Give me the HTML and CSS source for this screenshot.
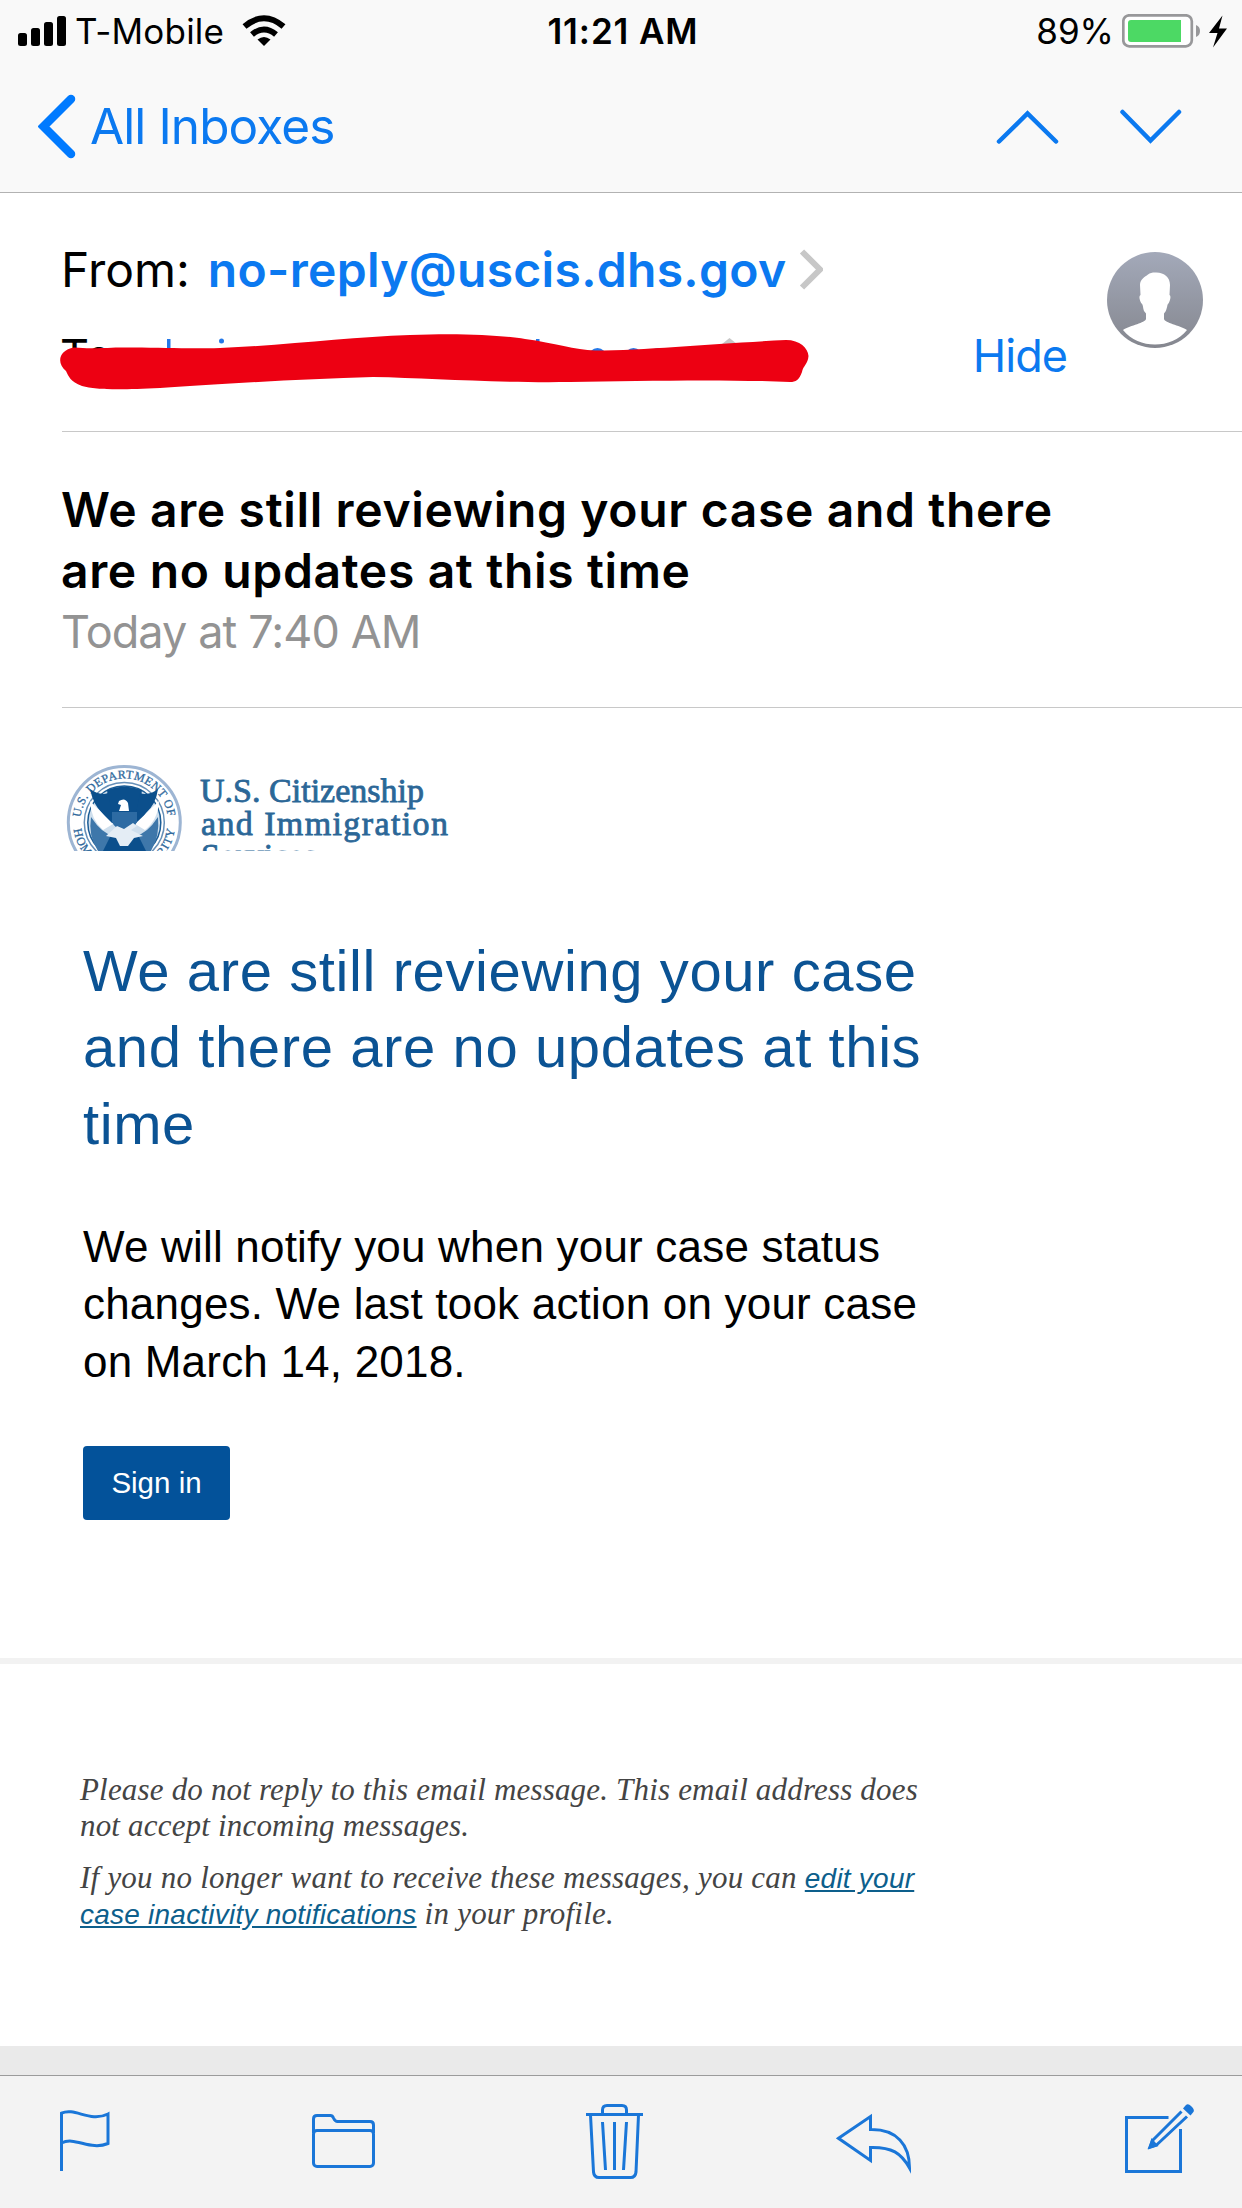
FILE: index.html
```html
<!DOCTYPE html>
<html lang="en">
  <head>
    <meta charset="UTF-8" />
    <meta name="viewport" content="width=device-width, initial-scale=1.0" />
    <title>All Inboxes</title>
    <link rel="stylesheet" href="styles.css">
  </head>
  <body>
    <div class="topbar">
      <div class="status">
        <div class="status-left">
          <svg class="signal" viewBox="18 15 48 30" width="48" height="30">
            <rect x="18" y="32" width="9" height="13" rx="2.5" />
            <rect x="31" y="27" width="9" height="18" rx="2.5" />
            <rect x="44" y="21" width="9" height="24" rx="2.5" />
            <rect x="57" y="15" width="9" height="30" rx="2.5" />
          </svg>
          <span class="carrier">T-Mobile</span>
          <svg class="wifi" viewBox="242 14 44 32" width="44" height="32">
            <path d="M244.500 25.500Q264 9 283.500 25.500" fill="none" stroke="#000" stroke-width="6" />
            <path d="M252 33.500Q264 23.500 276 33.500" fill="none" stroke="#000" stroke-width="6" />
            <path d="M257.500 38.500Q264 33.500 270.500 38.500L264 45Z" />
          </svg>
        </div>
        <span class="time">11:21 AM</span>
        <div class="status-right">
          <span class="percent">89%</span>
          <svg class="battery" viewBox="1122 13 106 34" width="106" height="34">
            <rect x="1123.300" y="14.300" width="68.500" height="31" rx="6" fill="#fff" stroke="#98989a" stroke-width="2.700" />
            <path d="M1131 19h50v22h-50a3 3 0 0 1-3-3v-16a3 3 0 0 1 3-3z" fill="#4cd964" />
            <path d="M1196 24q4 1.500 4 6t-4 6z" fill="#98989a" />
            <path d="M1222.500 14.500L1209 32h8.500L1213 46.500L1227 27.500h-8z" />
          </svg>
        </div>
      </div>
      <div class="nav">
        <a class="back">
          <svg viewBox="38 94 38 66" width="38" height="66">
            <path d="M71 99L43.500 126.500L71 154" fill="none" stroke="#007aff" stroke-width="8.500" stroke-linecap="round" />
          </svg>
          <span>All Inboxes</span>
        </a>
        <svg class="arrows" viewBox="996 106 186 40" width="186" height="40">
          <path d="M999 140.500L1027.500 112.500L1056 140.500M1122.500 111L1150.500 139.500L1179 111" />
        </svg>
      </div>
    </div>

    <div class="header">
      <div class="addresses">
        <div class="from">
          <span class="label">From:</span>
          <span class="sender">no-reply@uscis.dhs.gov</span>
          <svg viewBox="800 248 24 44" width="24" height="44">
            <path d="M803 251.500L821 269.500L803 287.500" fill="none" stroke="#c7c7c7" stroke-width="6" />
          </svg>
        </div>
        <div class="to">
          <span class="to-label">To:</span>
          <a class="hide">Hide</a>
          <!-- blacked out recipient -->
          <svg class="scribble" viewBox="58 330 754 62" width="754" height="62">
            <g fill="#2478e8">
              <rect x="167" y="339" width="3.500" height="12" />
              <circle cx="221.500" cy="341" r="2.500" />
              <rect x="536" y="339" width="3.500" height="6" />
              <circle cx="597.500" cy="357" r="9" />
              <circle cx="633.500" cy="357" r="9" />
              <circle cx="658" cy="357" r="9" />
            </g>
            <path d="M722 344L729.500 338L737 344Z" fill="#c7c7c7" />
            <path d="M74 347.500C90 349 100 348 120 347.500C160 347 180 349 220 348C290 345 350 337 410 335C460 333 500 335 525 339C555 343 575 350 595 350.500C650 350 720 343 786 340C800 340 808 348 808.500 356C808 364 803 366 802 372C799 380 796 382 790 382C720 379 640 381 570 382C490 383 430 378 373 377C300 379 220 384 160 388C120 390 96 390 82 386C70 381 69 377 66 371C56 363 59 350 74 347.500Z" fill="#ed0012" />
          </svg>
        </div>
      </div>
      <svg class="avatar" viewBox="0 0 96 96" width="96" height="96">
        <defs>
          <linearGradient id="avatarBg" x1="0" y1="0" x2="0" y2="1">
            <stop offset="0" stop-color="#a3a9b9" />
            <stop offset="1" stop-color="#85878f" />
          </linearGradient>
        </defs>
        <circle cx="48" cy="48" r="48" fill="url(#avatarBg)" />
        <path d="M48 20.500C57 20 63 25 63 33L62.500 43C64.500 44 63 49 61.500 51.500C60 52 60.500 56 58.500 59.500L57 61.500V67C58 71 72 73 80 78C72 88 60 92.500 48 92.500S24 88 16 78C24 73 38 71 39 67V61.500L37 59C36 56 36 52 34.500 51.500C32 47 32 44 33.500 43L33 33C33 27 38 25 41 22.500C43 21 45 20.500 48 20.500Z" fill="#fff" />
      </svg>
    </div>

    <div class="subject">
      <h1>We are still reviewing your case and there<br>are no updates at this time</h1>
      <p class="date">Today at 7:40 AM</p>
    </div>

    <div class="message">
      <svg class="logo" viewBox="62 763 392 88" width="392" height="88">
        <defs>
          <path id="arcTop" d="M80.300 822.500A44 44 0 0 1 168.300 822.500" />
          <path id="arcBottom" d="M73.300 822.500A51 51 0 0 0 175.300 822.500" />
        </defs>
        <circle cx="124.300" cy="822.500" r="56" fill="#fff" stroke="#9db5d3" stroke-width="3" />
        <circle cx="124.300" cy="822.500" r="40" fill="#fff" stroke="#6790b8" stroke-width="1.500" />
        <circle cx="124.300" cy="822.500" r="36.500" fill="#cfdfed" stroke="#1b5d96" stroke-width="1.500" />
        <g class="seal-text">
          <text><textPath href="#arcTop" startOffset="5" textLength="127">U.S. DEPARTMENT OF</textPath></text>
          <text><textPath href="#arcBottom" startOffset="7" textLength="146">HOMELAND SECURITY</textPath></text>
        </g>
        <!-- eagle -->
        <path d="M107 790Q124 783 142 790L139 814H110Z" fill="#0b4f8c" />
        <path d="M90 789Q100 796 108 793L112 813Q124 820 136 813L140 793Q149 796 158 789Q156 804 146 813L139 823H110L102 813Q93 804 90 789Z" fill="#0b4f8c" />
        <path d="M90 801L113 824L103 830Q91 820 90 801ZM159 801L135 824L145 830Q158 820 159 801Z" fill="#fff" />
        <path d="M91 817Q102 834 114 836L111 851H98Q88 836 91 817ZM158 817Q147 834 135 836L138 851H151Q160 836 158 817Z" fill="#3e77aa" />
        <path d="M111 835L138 835L146 851H103Z" fill="#0b4f8c" />
        <path d="M119 801Q125 797 128 803L129 811H119L121 805L118 804Z" fill="#fff" />
        <path d="M112 812H137V822Q134 829 124.500 831Q115 829 112 822Z" fill="#2d6ba3" />
        <path d="M106 836L117 826L124 829L133 823L137 826L131 830L143 836L134 838L128 846H120L116 838Z" fill="#e4edf5" />
        <g class="logo-text">
          <text x="200" y="802" textLength="224">U.S. Citizenship</text>
          <text x="201" y="834.500" textLength="247">and Immigration</text>
          <text x="201" y="867" textLength="116">Services</text>
        </g>
      </svg>
      <h2>We are still reviewing your case<br>and there are no updates at this<br>time</h2>
      <p class="body-text">We will notify you when your case status<br>changes. We last took action on your case<br>on March 14, 2018.</p>
      <a class="signin">Sign in</a>
    </div>

    <div class="footer">
      <p class="f1">Please do not reply to this email message. This email address does<br>not accept incoming messages.</p>
      <p class="f2">If you no longer want to receive these messages, you can <a>edit your<br>case inactivity notifications</a> in your profile.</p>
    </div>

    <div class="toolbar">
      <svg viewBox="60 2095 59 90" width="59" height="90">
        <path d="M61.500 2171V2113.200C75 2107 90 2123 108 2114V2143.500C90 2151 75 2136 61.500 2143" />
      </svg>
      <svg viewBox="312 2095 81 90" width="81" height="90">
        <path d="M313.500 2133V2119Q313.500 2115.500 317 2115.500H330.500Q332.500 2115.500 333.500 2118Q335 2121.500 337.500 2121.500H370Q373.500 2121.500 373.500 2125V2133" />
        <rect x="313.500" y="2130.500" width="60" height="36" rx="3.500" />
      </svg>
      <svg viewBox="586 2095 57 90" width="57" height="90">
        <path d="M586 2114.500H643M602.500 2114V2110Q602.500 2105.500 607 2105.500H622Q626.500 2105.500 626.500 2110V2114M590.500 2115L593.500 2172Q594 2177.500 599 2177.500H630.500Q635.500 2177.500 636 2172L638.500 2115M602.500 2122L605.500 2170M614.500 2122V2170M626.500 2122L623.500 2170" />
      </svg>
      <svg viewBox="836 2095 96 90" width="96" height="90">
        <path d="M838.500 2138.300L870.500 2116.500V2129.500C897 2129 909.500 2145 909.500 2168C901 2153 892 2147 870.500 2147.500V2160.500Z" />
      </svg>
      <svg viewBox="1125 2095 72 90" width="72" height="90">
        <path d="M1168.500 2117.500H1126.500V2171.500H1180.500V2129" />
        <path d="M1181.500 2111.500L1152.500 2140.500L1150 2147L1156.500 2145L1187 2116.500" />
        <path d="M1148 2149.500L1151.500 2138L1158.500 2146Z" class="solid" />
        <path d="M1183 2108.500L1185.500 2105.500Q1188 2103 1191 2106L1192.500 2107.500Q1195 2110.500 1193 2112.500L1190.500 2115.500Z" class="solid" />
      </svg>
    </div>
  </body>
</html>
```
FILE: styles.css
```css
body {
  font-family: Inter, "Liberation Sans", sans-serif;
  display: flex;
  flex-direction: column;
  height: 2208px;
  margin: 0;
  background: #fff;
  color: #000;
  white-space: nowrap;
  overflow: hidden;
}
h1, h2, p {
  margin: 0;
  font-weight: normal;
}
svg {
  display: block;
  flex: none;
}
.topbar {
  height: 192px;
  background: #f9f9f9;
  border-bottom: 1px solid #b2b2b2;
}
.status {
  display: grid;
  grid-template-columns: 1fr auto 1fr;
  align-items: center;
  height: 61px;
  padding: 0 14px 0 18px;
  font-size: 35px;
}
.status-left, .status-right {
  display: flex;
  align-items: center;
}
.status-right {
  justify-content: flex-end;
}
.carrier {
  width: 167px;
  margin-left: 9px;
  letter-spacing: 0.2px;
}
.time {
  font-weight: 600;
  letter-spacing: 0.9px;
}
.percent {
  margin-right: 8px;
}
.nav {
  display: flex;
  align-items: center;
  justify-content: space-between;
  height: 131px;
  padding: 0 60px 0 38px;
}
.back {
  display: flex;
  align-items: center;
  gap: 14px;
  font-size: 49.5px;
  line-height: 60px;
  letter-spacing: -0.9px;
  color: #0b79f0;
}
.back span {
  padding-bottom: 2px;
}
.arrows path {
  fill: none;
  stroke: #0b79f0;
  stroke-width: 4.5;
  stroke-linecap: round;
}
.header {
  display: flex;
  height: 238px;
  margin-left: 62px;
  border-bottom: 1px solid #c8c8c8;
}
.addresses {
  width: 1005px;
  padding-top: 47px;
}
.from, .to {
  display: flex;
  align-items: center;
  height: 60px;
  line-height: 60px;
}
.from {
  font-size: 48px;
}
.label {
  margin-left: -1px;
}
.sender {
  width: 580px;
  margin: 0 11px 0 18px;
  font-weight: 600;
  letter-spacing: 0.3px;
  color: #0b79f0;
}
.to {
  position: relative;
  justify-content: space-between;
  margin-top: 26px;
  font-size: 45px;
}
.to-label {
  margin-left: -2px;
}
.hide {
  letter-spacing: -1px;
  color: #0b79f0;
}
/* drawn over the recipient line */
.scribble {
  position: absolute;
  left: -4px;
  top: 4px;
}
.avatar {
  margin: 59px 0 0 40px;
}
.subject {
  height: 275px;
  margin-left: 62px;
  border-bottom: 1px solid #c8c8c8;
  line-height: 61px;
}
.subject h1 {
  padding-top: 47px;
  margin-left: -1px;
  font-size: 48px;
  font-weight: 600;
  letter-spacing: 0.65px;
}
.date {
  margin-left: -1px;
  font-size: 45px;
  letter-spacing: -0.9px;
  color: #939393;
}
.message {
  height: 950px;
  padding-left: 83px;
  border-bottom: 6px solid #f2f2f2;
  font-family: "Liberation Sans", Arial, sans-serif;
}
.logo {
  margin: 55px 0 0 -21px;
}
.logo-text {
  font-family: "Liberation Serif", serif;
  font-size: 34px;
  fill: #2b6797;
  stroke: #2b6797;
  stroke-width: 0.8;
}
.seal-text {
  font-family: "Liberation Serif", serif;
  font-size: 12px;
  fill: #2f699c;
  stroke: #2f699c;
  stroke-width: 0.3;
}
.message h2 {
  margin-top: 82px;
  font-size: 58px;
  line-height: 76.3px;
  letter-spacing: 0.6px;
  color: #0b5394;
}
.body-text {
  margin-top: 56px;
  font-size: 44px;
  line-height: 57.5px;
  letter-spacing: 0.2px;
}
.signin {
  display: inline-block;
  margin-top: 56px;
  width: 147px;
  height: 74px;
  line-height: 74px;
  border-radius: 4px;
  background: #03529a;
  color: #fff;
  font-size: 29.5px;
  text-align: center;
}
.footer {
  height: 382px;
  padding-left: 80px;
  border-bottom: 29px solid #eaeaea;
  font-family: "Liberation Serif", Georgia, serif;
  font-style: italic;
  font-size: 31px;
  line-height: 35.5px;
  letter-spacing: 0.18px;
  color: #444;
}
.f1 {
  padding-top: 108px;
}
.f2 {
  margin-top: 17px;
  letter-spacing: 0.23px;
}
.footer a {
  font-family: "Liberation Sans", Arial, sans-serif;
  font-size: 28px;
  line-height: 0;
  color: #0d5f8c;
  text-decoration: underline;
}
.toolbar {
  display: flex;
  gap: 193px;
  flex: 1;
  padding: 19px 0 0 60px;
  border-top: 1px solid #9b9b9b;
  background: #f3f3f3;
}
.toolbar path, .toolbar rect {
  fill: none;
  stroke: #1a76d8;
  stroke-width: 3;
}
.toolbar .solid {
  fill: #1a76d8;
  stroke: none;
}
```
